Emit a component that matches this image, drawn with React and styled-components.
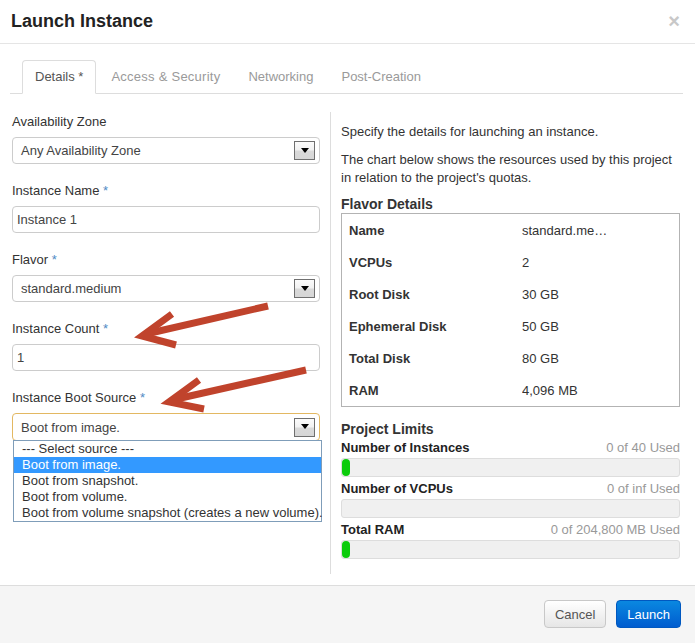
import React from "react";
import styled, { createGlobalStyle } from "styled-components";

const Global = createGlobalStyle`
  html, body { margin: 0; padding: 0; background: #fff; }
  body {
    font-family: "Liberation Sans", Arial, sans-serif;
    font-size: 13px;
    color: #333;
  }
  * { box-sizing: border-box; }
`;

const Modal = styled.div`
  position: relative;
  width: 695px;
  height: 643px;
  display: flex;
  flex-direction: column;
  background: #fff;
  overflow: hidden;
`;

const Header = styled.div`
  height: 44px;
  border-bottom: 1px solid #e5e5e5;
  display: flex;
  align-items: center;
  justify-content: space-between;
  padding: 0 15px 1px 11px;
`;

const Title = styled.h3`
  margin: 0;
  font-size: 18px;
  font-weight: bold;
  line-height: 20px;
  color: #222;
`;

const Close = styled.span`
  font-size: 20px;
  font-weight: bold;
  line-height: 20px;
  color: #c8c8c8;
`;

const Body = styled.div`
  flex: 1;
  padding: 16px 12px 0 10px;
`;

const TabNav = styled.div`
  display: flex;
  padding-left: 12px;
  border-bottom: 1px solid #ddd;
`;

const Tab = styled.div`
  padding: 8px 12px;
  line-height: 16px;
  margin-right: 2px;
  margin-bottom: -1px;
  border: 1px solid ${(p) => (p.$active ? "#ddd" : "transparent")};
  border-bottom-color: transparent;
  border-radius: 4px 4px 0 0;
  background: ${(p) => (p.$active ? "#fff" : "transparent")};
  color: ${(p) => (p.$active ? "#555" : "#9a9a9a")};
  letter-spacing: ${(p) => (p.$wide ? "0.25px" : "0")};
`;

const TabContent = styled.div`
  display: flex;
  gap: 10px;
  padding: 18px 3px 0 2px;
`;

const LeftCol = styled.div`
  width: 308px;
  flex: none;
  padding-top: 1px;
`;

const FormGroup = styled.div`
  position: relative;
  margin-bottom: 18px;
`;

const Label = styled.label`
  display: block;
  line-height: 18px;
  margin-bottom: 6px;
  color: #333;
`;

const Req = styled.span`
  color: #4f8ac4;
`;

const SelectBox = styled.div`
  position: relative;
  height: ${(p) => (p.$focus ? 28 : 27)}px;
  border: 1px solid ${(p) => (p.$focus ? "#e3b862" : "#ccc")};
  border-radius: 4px;
  display: flex;
  align-items: center;
  justify-content: space-between;
  padding: 0 4px 0 8px;
  color: #444;
  background: #fff;
`;

const ArrowBtn = styled.span`
  width: 21px;
  height: 19px;
  border: 1px solid #6f6f6f;
  background: linear-gradient(#fbfbfb 0%, #f2f2f2 45%, #d9d9d9 55%, #d6d6d6 100%);
  display: flex;
  align-items: center;
  justify-content: center;
  &::after {
    content: "";
    width: 0;
    height: 0;
    border-left: 4px solid transparent;
    border-right: 4px solid transparent;
    border-top: 5px solid #000;
    margin-top: -1px;
  }
`;

const Input = styled.div`
  height: 27px;
  border: 1px solid #ccc;
  border-radius: 4px;
  display: flex;
  align-items: center;
  padding-left: 4px;
  color: #444;
`;

const DropList = styled.div`
  position: absolute;
  left: 0;
  top: 100%;
  width: 309px;
  border: 1px solid #7f9db9;
  background: #fff;
  z-index: 2;
`;

const Option = styled.div`
  height: 16px;
  line-height: 16px;
  padding-left: 8px;
  white-space: nowrap;
  background: ${(p) => (p.$selected ? "#3399ff" : "#fff")};
  color: ${(p) => (p.$selected ? "#fff" : "#333")};
`;

const RightCol = styled.div`
  flex: 1;
  border-left: 1px solid #ddd;
  padding: 11px 0 11px 10px;
`;

const Para = styled.p`
  margin: 0 0 10px;
  line-height: 18px;
  color: #333;
`;

const Heading = styled.h4`
  margin: ${(p) => (p.$gap ? "13px 0 2px" : "-2px 0 0")};
  font-size: 14px;
  font-weight: bold;
  line-height: 18px;
  color: #333;
`;

const Table = styled.div`
  border: 1px solid #b3b3b3;
`;

const Row = styled.div`
  display: grid;
  grid-template-columns: 180px 1fr;
  height: 32px;
  align-items: center;
`;

const Key = styled.div`
  padding-left: 7px;
  font-weight: bold;
  color: #333;
`;

const Val = styled.div`
  width: 92px;
  white-space: nowrap;
  overflow: hidden;
  text-overflow: ellipsis;
  color: #333;
`;

const Limit = styled.div`
  margin-bottom: 4px;
`;

const LimitHead = styled.div`
  display: flex;
  justify-content: space-between;
  line-height: 16px;
  margin-bottom: 2px;
`;

const LimitName = styled.span`
  font-weight: bold;
  color: #222;
`;

const LimitUsed = styled.span`
  color: #999;
`;

const Bar = styled.div`
  height: 19px;
  border: 1px solid #ddd;
  border-radius: 3px;
  background: #f0f0f0;
  overflow: hidden;
`;

const Fill = styled.div`
  height: 100%;
  background: #0ccc0c;
  border-radius: 4px;
`;

const Footer = styled.div`
  height: 58px;
  flex: none;
  border-top: 1px solid #ddd;
  background: #f5f5f5;
  display: flex;
  justify-content: flex-end;
  gap: 10px;
  padding: 14px 14px 0;
`;

const Button = styled.button`
  height: 28px;
  padding: 0 10px;
  border-radius: 4px;
  font-family: inherit;
  font-size: 13px;
  border: 1px solid ${(p) => (p.$primary ? "#0058c0" : "#c8c8c8")};
  background: ${(p) =>
    p.$primary
      ? "linear-gradient(#0a88e0, #005ccf)"
      : "linear-gradient(#ffffff, #e6e6e6)"};
  color: ${(p) => (p.$primary ? "#fff" : "#555")};
`;

const Overlay = styled.svg`
  position: absolute;
  left: 0;
  top: 0;
  pointer-events: none;
  z-index: 5;
`;

const flavor = [
  ["Name", "standard.medium"],
  ["VCPUs", "2"],
  ["Root Disk", "30 GB"],
  ["Ephemeral Disk", "50 GB"],
  ["Total Disk", "80 GB"],
  ["RAM", "4,096 MB"],
];

const limits = [
  ["Number of Instances", "0 of 40 Used", 8],
  ["Number of VCPUs", "0 of inf Used", 0],
  ["Total RAM", "0 of 204,800 MB Used", 8],
];

const options = [
  "--- Select source ---",
  "Boot from image.",
  "Boot from snapshot.",
  "Boot from volume.",
  "Boot from volume snapshot (creates a new volume).",
];

export default function App() {
  return (
    <>
      <Global />
      <Modal>
        <Header>
          <Title>Launch Instance</Title>
          <Close>×</Close>
        </Header>
        <Body>
          <TabNav>
            <Tab $active>Details *</Tab>
            <Tab $wide>Access &amp; Security</Tab>
            <Tab>Networking</Tab>
            <Tab>Post-Creation</Tab>
          </TabNav>
          <TabContent>
            <LeftCol>
              <FormGroup>
                <Label>Availability Zone</Label>
                <SelectBox>
                  Any Availability Zone
                  <ArrowBtn />
                </SelectBox>
              </FormGroup>
              <FormGroup>
                <Label>
                  Instance Name <Req>*</Req>
                </Label>
                <Input>Instance 1</Input>
              </FormGroup>
              <FormGroup>
                <Label>
                  Flavor <Req>*</Req>
                </Label>
                <SelectBox>
                  standard.medium
                  <ArrowBtn />
                </SelectBox>
              </FormGroup>
              <FormGroup>
                <Label>
                  Instance Count <Req>*</Req>
                </Label>
                <Input>1</Input>
              </FormGroup>
              <FormGroup>
                <Label>
                  Instance Boot Source <Req>*</Req>
                </Label>
                <SelectBox $focus>
                  Boot from image.
                  <ArrowBtn />
                  <DropList>
                    {options.map((o, i) => (
                      <Option key={o} $selected={i === 1}>
                        {o}
                      </Option>
                    ))}
                  </DropList>
                </SelectBox>
              </FormGroup>
            </LeftCol>
            <RightCol>
              <Para>Specify the details for launching an instance.</Para>
              <Para>
                The chart below shows the resources used by this project
                <br />
                in relation to the project's quotas.
              </Para>
              <Heading>Flavor Details</Heading>
              <Table>
                {flavor.map(([k, v]) => (
                  <Row key={k}>
                    <Key>{k}</Key>
                    <Val>{v}</Val>
                  </Row>
                ))}
              </Table>
              <Heading $gap>Project Limits</Heading>
              {limits.map(([name, used, w]) => (
                <Limit key={name}>
                  <LimitHead>
                    <LimitName>{name}</LimitName>
                    <LimitUsed>{used}</LimitUsed>
                  </LimitHead>
                  <Bar>{w > 0 && <Fill style={{ width: w }} />}</Bar>
                </Limit>
              ))}
            </RightCol>
          </TabContent>
        </Body>
        <Footer>
          <Button>Cancel</Button>
          <Button $primary>Launch</Button>
        </Footer>
        <Overlay width="695" height="643" viewBox="0 0 695 643">
          <g stroke="#c0432c" strokeWidth="7" fill="none" strokeLinejoin="miter">
            <path d="M268 306 L146 334" />
            <path d="M172 314 L142 336 L176 345" />
            <path d="M306 370 L172 400" />
            <path d="M199 380 L169 402 L204 409" />
          </g>
        </Overlay>
      </Modal>
    </>
  );
}
